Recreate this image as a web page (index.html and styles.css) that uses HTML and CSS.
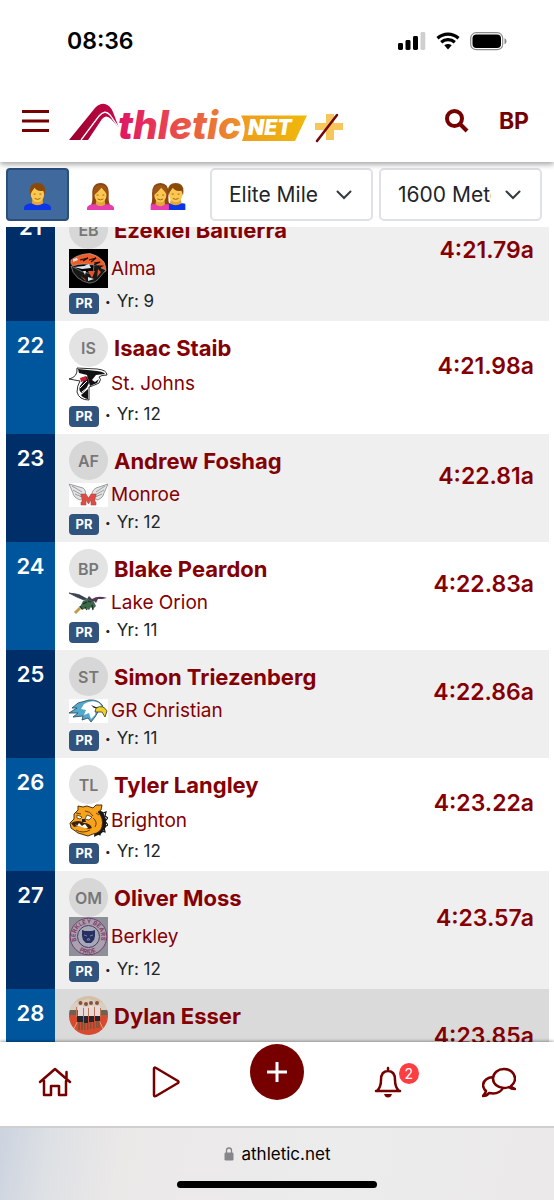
FILE: index.html
```html
<!DOCTYPE html>
<html lang="en">
<head>
<meta charset="utf-8">
<meta name="viewport" content="width=device-width, initial-scale=1">
<title>Athletic.net rankings</title>
<link rel="stylesheet" href="styles.css">
</head>
<body>
<div class="status">
  <span class="clock">08:36</span>
  <svg class="signal" viewBox="0 0 28 18" aria-hidden="true"><rect y="11" width="5" height="7" rx="1.4"/><rect x="7.500" y="8" width="5" height="10" rx="1.4"/><rect x="15" y="4" width="5" height="14" rx="1.4"/><rect x="22.500" width="4.800" height="18" rx="1.4" fill="#cfcfcf"/></svg>
  <svg class="wifi" viewBox="0 0 24 18" aria-hidden="true"><path d="M1.500 6.200C7.500.7 16.500.7 22.500 6.200M5.200 10.200C9 6.700 15 6.700 18.800 10.200" fill="none" stroke="#000" stroke-width="3.200"/><path d="M8.300 13.300Q12 10.500 15.700 13.300L12 17.500z"/></svg>
  <svg class="battery" viewBox="0 0 37 19" aria-hidden="true"><rect x=".7" y=".7" width="32" height="17" rx="5.500" fill="none" stroke="#8d8d8d" stroke-width="1.200"/><rect x="2.500" y="2.500" width="28.500" height="13.500" rx="4"/><path d="M34.500 6.300q2 .7 2 3t-2 3z" fill="#888"/></svg>
</div>

<header class="header">
  <button class="icon-button" aria-label="Menu"><svg class="burger" viewBox="0 0 27 24"><path d="M0 2.500h27M0 12h27M0 21.500h27"/></svg></button>
  <a class="brand" href="#" aria-label="Athletic.net plus">
    <svg class="logo" viewBox="0 0 276 40">
      <defs>
        <linearGradient id="word" gradientUnits="userSpaceOnUse" x1="50" x2="174" y1="0" y2="0"><stop stop-color="#e01565"/><stop offset=".4" stop-color="#e94350"/><stop offset="1" stop-color="#ec9725"/></linearGradient>
        <linearGradient id="peak" x1="0" x2="1"><stop stop-color="#98002b"/><stop offset="1" stop-color="#c9094c"/></linearGradient>
        <linearGradient id="flag" x1="0" x2="1"><stop stop-color="#ee9d1d"/><stop offset="1" stop-color="#efb90c"/></linearGradient>
      </defs>
      <path d="M0 38L26 6Q31 1 36 2Q41 3 44 10L50 26L42 17Q37 12 33 17L19 38z" fill="url(#peak)"/>
      <path d="M12 38L30 14Q36 7 41 13L50 26" fill="none" stroke="#fff" stroke-width="1.300"/>
      <path d="M172 13.500h66L226 39H173Q179 26 172 13.500z" fill="url(#flag)"/>
      <text class="word" x="49" y="37" fill="url(#word)">thletic</text>
      <text class="net" x="179" y="33" fill="#fff">NET</text>
      <path d="M257 12h8v9h9v7h-9v10h-8V28h-11v-7h11z" fill="#f7c65a"/>
      <path d="M248 39L268 13" stroke="#76040b" stroke-width="2.500" stroke-linecap="round"/>
    </svg>
  </a>
  <button class="icon-button" aria-label="Search"><svg class="search" viewBox="0 0 24 24"><circle cx="9.500" cy="9.500" r="7.500"/><path d="M15 15l7 7"/></svg></button>
  <button class="icon-button initials">BP</button>
</header>

<svg class="defs" aria-hidden="true">
  <symbol id="man" viewBox="0 0 28 28"><path d="M0 28v-2q0-4 7-5h14q7 1 7 5v2z" fill="#0b35e8"/><path d="M9 16h10l1 5q-6 4-12 0z" fill="#e2a837"/><ellipse cx="14" cy="11.500" rx="7" ry="8.500" fill="#fac850"/><path d="M6.500 13Q4 0 14 0T21.500 13L20 8Q13 9 11 5Q9 8 8 9z" fill="#8a490c"/><path d="M10 11.500h2m4 0h2m-7 4.500q3 2 6 0" stroke="#a85d17" fill="none"/></symbol>
  <symbol id="woman" viewBox="0 0 28 28"><path d="M4 23Q6 20 5.500 12Q5 0 14 0T22.500 12Q22 20 24 23z" fill="#8c4410"/><path d="M0 28v-2q0-3 6-4h16q6 1 6 4v2z" fill="#e83caf"/><path d="M10 16h8l1 6q-5 4-10 0z" fill="#e2a837"/><ellipse cx="14" cy="12" rx="6.300" ry="8.300" fill="#fac850"/><path d="M7 13Q5 2 14 2T21 13Q19 9 15 5Q11 10 7 13z" fill="#9d5515"/><path d="M10 12.500h2m4 0h2m-7 4q3 2 6 0" stroke="#a85d17" fill="none"/></symbol>
</svg>

<div class="filters">
  <button class="gender selected" aria-label="Men" aria-pressed="true"><svg class="person" viewBox="0 0 28 28"><use href="#man"/></svg></button>
  <button class="gender" aria-label="Women" aria-pressed="false"><svg class="person" viewBox="0 0 28 28"><use href="#woman"/></svg></button>
  <button class="gender pair" aria-label="Men and women" aria-pressed="false"><svg class="people" viewBox="0 0 36 28"><svg x="18" width="18" height="28" viewBox="4 0 18 28"><use href="#man" x="-2" width="28" height="28"/></svg><svg width="19" height="28" viewBox="4 0 19 28"><use href="#woman" width="28" height="28"/></svg></svg></button>
  <div class="select"><select aria-label="Division"><option>Elite Mile</option></select><svg class="chevron" viewBox="0 0 16 10"><path d="M1.500 1.500L8 8l6.500-6.500"/></svg></div>
  <div class="select"><select aria-label="Event"><option>1600 Meters</option></select><svg class="chevron" viewBox="0 0 16 10"><path d="M1.500 1.500L8 8l6.500-6.500"/></svg></div>
</div>

<main class="results">
<table class="ranking">
  <tbody>
  <tr>
    <td class="rank">21</td>
    <td class="athlete">
      <div class="person-line"><span class="avatar">EB</span><a class="name" href="#">Ezekiel Baltierra</a></div>
      <div class="school"><svg class="team" viewBox="0 0 39 39"><path d="M0 0h39v39H0z"/><path d="M2 11Q9 5 21 4.500Q29 6 35 13Q37 18 37 22L33 24Q31 17 25 16L15 15Q9 15 4 17Q1 15 2 11z" fill="#ee5c29" stroke="#bbb" stroke-width=".6"/><path d="M2 17Q3 24 9 29Q14 33 20 34Q27 34 31 28L37 21L32 19Q31 15 25 16L24 25L14 23z" fill="#171717" stroke="#aaa" stroke-width=".6"/><path d="M4 10L8 9 9 11 4 13zM5 18l10-1 5-2 2 4-9 1zM19 28l6 2-6 2zM14 22l2 4 1-4z" fill="#dbe4ec"/><path d="M19 22l7 0-3 7zM11 27l5 3 1 2zM29 20l3 3-4 5z" fill="#e45228"/><path d="M11 11l8-2-5 3M20 11l7-2-5 4M25 14l6-1-6 3M29 17l4 0-3 2" fill="none" stroke="#111" stroke-width="1.200"/></svg><a class="club" href="#">Alma</a></div>
      <div class="meta"><span class="pr">PR</span><span class="dot">•</span><span class="year">Yr: 9</span></div>
    </td>
    <td class="time"><a href="#">4:21.79a</a></td>
  </tr>
  <tr>
    <td class="rank">22</td>
    <td class="athlete">
      <div class="person-line"><span class="avatar">IS</span><a class="name" href="#">Isaac Staib</a></div>
      <div class="school"><svg class="team" viewBox="0 0 39 34"><path d="M8 1L28 2Q38 3 38 8Q32 8 30 10Q33 12 30 16Q24 19 20 20L20 33Q10 33 8 25Q8 19 11 14L0 12Q9 10 8 1z" fill="#fff" stroke="#171717" stroke-width=".9"/><path d="M9 2L28 4Q35 5 36 7L27 8L23 13L26 15L30 12L28 16L21 19L18 8L10 6zM18 9l2 7-3 6-4 4q-4-2-2-7zM12 28l7-6 0 10q-5-1-7-4z" fill="#111"/><path d="M11 11l6-2 1 4-6 2z" fill="#c51d32"/><path d="M11 21l7-7M13 25l5-4" stroke="#fff" stroke-width="1"/></svg><a class="club" href="#">St. Johns</a></div>
      <div class="meta"><span class="pr">PR</span><span class="dot">•</span><span class="year">Yr: 12</span></div>
    </td>
    <td class="time"><a href="#">4:21.98a</a></td>
  </tr>
  <tr>
    <td class="rank">23</td>
    <td class="athlete">
      <div class="person-line"><span class="avatar">AF</span><a class="name" href="#">Andrew Foshag</a></div>
      <div class="school short"><svg class="team" viewBox="0 0 39 24"><path d="M0 0h39v24H0z" fill="#fff"/><path d="M0 1L14 5Q18 8 16 14L11 17Q4 14 4 10zM39 1L27 5Q22 8 23 14L29 17Q35 14 35 10z" fill="#e3e5e6" stroke="#777" stroke-width=".7"/><path d="M3 3l10 6M4 7l9 5M6 11l7 3M36 3L27 9M35 7l-9 5M33 11l-7 3" stroke="#888" stroke-width=".8"/><path d="M12 11h5l2.500 4 2.500-4h5v3h-1v5h1v3h-5v-5l-2.500 4-2.500-4v5h-5v-3h1v-5h-1z" fill="#de4c45" stroke="#a5514c" stroke-width=".6"/></svg><a class="club" href="#">Monroe</a></div>
      <div class="meta"><span class="pr">PR</span><span class="dot">•</span><span class="year">Yr: 12</span></div>
    </td>
    <td class="time"><a href="#">4:22.81a</a></td>
  </tr>
  <tr>
    <td class="rank">24</td>
    <td class="athlete">
      <div class="person-line"><span class="avatar">BP</span><a class="name" href="#">Blake Peardon</a></div>
      <div class="school short"><svg class="team" viewBox="0 0 39 24"><path d="M0 2Q10 2 18 8L15 9Q7 6 0 2z" fill="#3a4254" stroke="#3a4254" stroke-width=".8"/><path d="M18 8L20 5 23 8Q29 4 38 7L33 8L29 8L27 12L25 10L23 13L18 12z" fill="#533958"/><path d="M14 10l5-2 6 3 2 4-3 3-2-2-2 3-3-2-4 2-2-3z" fill="#3d6949"/><path d="M11 15L5 21l2 2 5-5" fill="#c29a43"/><path d="M14 13l4-2m0 8l-2-3m7-2l1 5m-5-9l3 1m-11 4l2 3" stroke="#1b2e2c" stroke-width="1.300"/></svg><a class="club" href="#">Lake Orion</a></div>
      <div class="meta"><span class="pr">PR</span><span class="dot">•</span><span class="year">Yr: 11</span></div>
    </td>
    <td class="time"><a href="#">4:22.83a</a></td>
  </tr>
  <tr>
    <td class="rank">25</td>
    <td class="athlete">
      <div class="person-line"><span class="avatar">ST</span><a class="name" href="#">Simon Triezenberg</a></div>
      <div class="school short"><svg class="team" viewBox="0 0 39 24"><path d="M0 0h39v24H0z" fill="#fff"/><path d="M9 4L20 1Q29 0 34 7L29 13L26 18L22 23L19 19L13 21L14 17L4 18L9 14L0 14L8 9L3 9z" fill="#53a9cc" stroke="#23475d" stroke-width=".8"/><path d="M15 5Q23 0 30 4L33 8L27 12L26 16L22 20L20 14L15 16L17 11L12 10z" fill="#fff"/><path d="M27 9Q34 5 38 12L36 18L33 13L26 13z" fill="#eed02b" stroke="#393727" stroke-width=".8"/><path d="M22 6l7 3-4 0z" fill="#222"/></svg><a class="club" href="#">GR Christian</a></div>
      <div class="meta"><span class="pr">PR</span><span class="dot">•</span><span class="year">Yr: 11</span></div>
    </td>
    <td class="time"><a href="#">4:22.86a</a></td>
  </tr>
  <tr>
    <td class="rank">26</td>
    <td class="athlete">
      <div class="person-line"><span class="avatar">TL</span><a class="name" href="#">Tyler Langley</a></div>
      <div class="school"><svg class="team" viewBox="0 0 39 34"><path d="M28 5l6 3 3 7 0 8-4 6-8 4z" fill="#181818"/><path d="M34 9l3-1-1 4 3 2-3 3 3 4-4 2 1 5-4-1-1 4-4-2" fill="none" stroke="#181818" stroke-width="1.200"/><path d="M9 6L9 2 14 3 18 2 24 4 27 1 33 1 32 6 29 8Q35 14 33 23Q31 29 24 30L19 32L9 29L2 24 1 19 5 15 5 10z" fill="#f9a31b" stroke="#31220d" stroke-width=".9"/><path d="M2 19q8-4 13 0 6 0 8 5l-3 1-6-2-5-1-4 1z" fill="#3c220e"/><path d="M6 20l2 2 2-3 3 3 3-2 3 4-3 0-7-2z" fill="#fff"/><path d="M18 11l5 2-3 3-4-1zM8 11l5 2-2 2-3-1z" fill="#fff" stroke="#222" stroke-width=".7"/><path d="M13 15l3 0 1 3-4 0z" fill="#222"/><path d="M16 7q5 0 8 5M7 9l5 1m12 4q5 4 2 9m-19 3q7 4 14 0m6-17l3 2" fill="none" stroke="#422608" stroke-width=".8"/></svg><a class="club" href="#">Brighton</a></div>
      <div class="meta"><span class="pr">PR</span><span class="dot">•</span><span class="year">Yr: 12</span></div>
    </td>
    <td class="time"><a href="#">4:23.22a</a></td>
  </tr>
  <tr>
    <td class="rank">27</td>
    <td class="athlete">
      <div class="person-line"><span class="avatar">OM</span><a class="name" href="#">Oliver Moss</a></div>
      <div class="school"><svg class="team" viewBox="0 0 39 39"><defs><path id="ring-top" d="M8.500 26A12.800 12.800 0 1 1 30.500 26"/><path id="ring-bottom" d="M9.500 33.300A17 17 0 0 0 29.500 33.300"/></defs><path d="M0 0h39v39H0z" fill="#8d9197"/><circle cx="19.500" cy="19.500" r="18.300" fill="#a9a1b0" stroke="#713c6b"/><circle cx="19.500" cy="19.500" r="11" fill="#a5aab6" stroke="#53365e"/><g class="seal"><text><textPath href="#ring-top" startOffset="2">BERKLEY BEARS</textPath></text><text><textPath href="#ring-bottom" startOffset="1">PRIDE</textPath></text></g><path d="M13 13l3 1h7l3-1 0 6-1 4-3 3h-5l-3-3-1-4z" fill="#273061"/><path d="M15 18l3 1m6-1l-3 1m-3 4l1.500-2 1.500 2z" fill="none" stroke="#8087b4" stroke-width=".9"/></svg><a class="club" href="#">Berkley</a></div>
      <div class="meta"><span class="pr">PR</span><span class="dot">•</span><span class="year">Yr: 12</span></div>
    </td>
    <td class="time"><a href="#">4:23.57a</a></td>
  </tr>
  <tr class="active">
    <td class="rank">28</td>
    <td class="athlete">
      <div class="person-line"><svg class="photo" viewBox="0 0 39 39" role="img" aria-label="Dylan Esser"><path d="M0 0h39v39H0z" fill="#d3c0a6"/><path d="M0 8l19-5 20 5v6H0z" fill="#d8cfc2"/><path d="M0 19h39v20H0z" fill="#d84a30"/><path d="M0 14h39v5H0z" fill="#6b6255"/><path d="M3 37l8-17M36 37l-8-17" stroke="#ef9676"/><g fill="#8a5136"><circle cx="11.500" cy="7" r="2"/><circle cx="17" cy="8" r="2"/><circle cx="22" cy="7" r="2"/><circle cx="28" cy="7" r="2"/><path d="M9 26h2v8H9zM12 26h2v8h-2zM15 26h1.500v8H15zM18 26h1.500v8H18zM21 26h1.500v7H21zM24 26h1.500v7H24zM27 25h1.500v7H27zM29 25h1.500v7H29z"/></g><path d="M9 10h5v10H9zM15 11h4v9h-4zM20 10h5v10h-5zM26 10h5v10h-5z" fill="#ead9d9"/><path d="M8 20h6v6H8zM15 20h4v7h-4zM20 20h5v6h-5zM26 20h5v5h-5z" fill="#25262d"/><path d="M7.500 11v10m7-9v9m5-9v9m6-10v10m6-9v9" stroke="#b97558"/></svg><a class="name" href="#">Dylan Esser</a></div>
      <div class="school tall"></div>
      <div class="meta"></div>
    </td>
    <td class="time"><a href="#">4:23.85a</a></td>
  </tr>
  </tbody>
</table>
</main>

<nav class="tabs">
  <a href="#" aria-label="Home"><svg class="tab-icon" viewBox="0 0 34 32"><path d="M2 16L17 3l15 13M28.500 12V6M6 15v14h7v-9h8v9h7V15"/></svg></a>
  <a href="#" aria-label="Videos"><svg class="tab-icon" viewBox="0 0 34 32"><path d="M5 2.500Q5 1 7 2L29 15Q30 16 29 17L7 30Q5 31 5 29z"/></svg></a>
  <a href="#" aria-label="Add" class="add"><svg class="plus" viewBox="0 0 22 22"><path d="M11 1v20M1 11h20"/></svg></a>
  <a href="#" aria-label="Notifications"><svg class="tab-icon" viewBox="0 0 34 32"><path d="M17 2v3M5 25h24M6 25q4-4 4-11 0-9 7-9t7 9q0 7 4 11"/><path d="M13 28h8q-1 3.500-4 3.500t-4-3.500" class="solid"/></svg><span class="badge">2</span></a>
  <a href="#" aria-label="Messages"><svg class="tab-icon" viewBox="0 0 34 32"><path d="M29 20Q33 17 33 12.500C33 7 28 3 22 3S11 7 11 12.500s5 9.500 11 9.500q3 0 5-1 2 2 6 2-3-1-4-3zM11 11Q2 12 1 19q0 3 3 6-1 3-3 5 4 0 6-3 10 2 14-5"/></svg></a>
</nav>

<footer class="browser">
  <div class="address"><svg class="lock" viewBox="0 0 10 14"><path d="M2.500 6V3.500a2.500 2.500 0 0 1 5 0V6" fill="none" stroke="#85858a" stroke-width="1.300"/><rect x=".5" y="5.500" width="9" height="8" rx="1.300" fill="#85858a"/></svg><span>athletic.net</span></div>
  <div class="home-bar"></div>
</footer>
</body>
</html>
```
FILE: styles.css
```css
* { box-sizing: border-box; }

body {
  margin: 0;
  height: 100vh;
  display: flex;
  flex-direction: column;
  overflow: hidden;
  background: #fff;
  color: #212529;
  font-family: Inter, "Liberation Sans", sans-serif;
}

button {
  font: inherit;
  color: inherit;
  border: 0;
  padding: 0;
  background: none;
}

a { color: #840003; text-decoration: none; }

svg { display: block; flex: none; }

.defs { position: absolute; width: 0; height: 0; }

.status {
  flex: none;
  height: 82px;
  padding: 0 47px 0 67px;
  display: flex;
  align-items: center;
  gap: 10px;
}

.clock {
  flex: 1;
  color: #000;
  font-size: 23px;
  font-weight: 600;
}

.signal { width: 28px; height: 18px; }
.wifi { width: 24px; height: 18px; }
.battery { width: 37px; height: 19px; }

.header {
  position: relative;
  z-index: 1;
  flex: none;
  height: 80px;
  padding: 0 25px 2px 22px;
  display: flex;
  align-items: center;
  box-shadow: 0 2px 6px rgba(0, 0, 0, .4);
  background: #fff;
  clip-path: inset(0 0 -8px 0);
}

.icon-button { color: #760000; }
.burger { width: 27px; height: 24px; fill: none; stroke: #760000; stroke-width: 3; }
.brand { flex: 1; padding: 2px 0 0 20px; }
.logo { width: 276px; height: 40px; overflow: visible; }

.word, .net { font-family: Inter, sans-serif; font-style: italic; }
.word { font-size: 39px; font-weight: 800; }
.net { font-size: 21px; font-weight: 900; }

.search { width: 24px; height: 24px; fill: none; stroke: #760000; stroke-width: 4; }
.initials { margin-left: 30px; font-size: 23px; font-weight: 700; }

.filters {
  flex: none;
  height: 65px;
  padding: 6px 12px 6px 6px;
  display: flex;
}

.gender {
  flex: none;
  width: 63px;
  display: flex;
  align-items: center;
  justify-content: center;
  border: 2px solid transparent;
  border-radius: 4px;
  padding-top: 4px;
}

.gender.selected { background: #40699d; border-color: #2b4e7c; }
.gender.pair { width: 72px; }
.person { width: 27px; height: 27px; }
.people { width: 36px; height: 27px; }

.select {
  flex: 1;
  min-width: 0;
  margin-left: 6px;
  display: grid;
  align-items: center;
}

.select > * { grid-area: 1 / 1; }

.select select {
  appearance: none;
  width: 100%;
  height: 100%;
  padding: 0 49px 0 17px;
  border: 2px solid #dee2e6;
  border-radius: 5px;
  background: #fff;
  color: #212529;
  font: 400 21px Inter, sans-serif;
}

.chevron {
  width: 16px;
  height: 10px;
  margin-right: 21px;
  justify-self: end;
  fill: none;
  stroke: #343a40;
  stroke-width: 2;
  stroke-linecap: round;
  pointer-events: none;
}

.results {
  flex: 1;
  min-height: 0;
  margin: 0 5px 0 6px;
  overflow: hidden;
}

/* The list is scrolled part way into its first row. */
.ranking {
  width: 100%;
  margin-top: -24px;
  border-collapse: collapse;
}

.ranking td { padding: 0; vertical-align: top; }
.ranking tr:nth-child(odd) { background: #efefef; }
.ranking tr.active { background: #dadada; }

.ranking .rank {
  width: 49px;
  padding-top: 10px;
  background: #00569d;
  color: #fff;
  font-size: 22px;
  font-weight: 600;
  line-height: 28px;
  text-align: center;
}

.ranking tr:nth-child(odd) .rank { background: #002e69; }
.ranking .athlete { padding: 7px 0 0 14px; }

.person-line { display: flex; align-items: center; height: 39px; gap: 6px; }

.avatar, .photo { width: 39px; height: 39px; border-radius: 50%; }

.avatar {
  display: flex;
  align-items: center;
  justify-content: center;
  background: #e3e3e3;
  color: #777;
  font-size: 16px;
  font-weight: 600;
}

.ranking tr:nth-child(odd) .avatar { background: #d7d7d7; }

.name { font-size: 22px; font-weight: 700; line-height: 28px; white-space: nowrap; }
.school { display: flex; align-items: center; gap: 3px; }
.school.short { height: 29px; }
.school.tall { height: 39px; }
.team { width: 39px; }
.club { font-size: 19px; line-height: 24px; }
.seal { font: 700 6px Inter, sans-serif; fill: #813d67; }

.meta {
  display: flex;
  align-items: center;
  height: 33px;
  padding-bottom: 8px;
  gap: 6px;
  font-size: 17px;
}

.dot { font-size: 10px; }

.pr {
  width: 30px;
  margin-top: 5px;
  border-radius: 4px;
  background: #31547f;
  color: #fff;
  font-size: 13px;
  font-weight: 700;
  line-height: 21px;
  text-align: center;
}

.ranking .time {
  padding: 0 15px 24px 0;
  vertical-align: middle;
  text-align: right;
  font-size: 23px;
  font-weight: 600;
}

.tabs {
  position: relative;
  flex: none;
  height: 84px;
  padding-bottom: 4px;
  display: grid;
  grid-template-columns: repeat(5, 1fr);
  align-items: center;
  justify-items: center;
  background: #fff;
  box-shadow: 0 -1px 3px rgba(0, 0, 0, .35);
}

.tabs a { position: relative; }

.tab-icon {
  width: 34px;
  height: 32px;
  fill: none;
  stroke: #760000;
  stroke-width: 2.5;
  stroke-linecap: round;
  stroke-linejoin: round;
}

.solid { fill: #760000; stroke: none; }

.add {
  width: 54px;
  height: 56px;
  margin-bottom: 20px;
  display: flex;
  align-items: center;
  justify-content: center;
  border-radius: 50%;
  background: #760000;
}

.plus { width: 22px; height: 22px; fill: none; stroke: #fff; stroke-width: 3; }

.badge {
  position: absolute;
  top: -3px;
  right: -14px;
  width: 20px;
  border-radius: 50%;
  background: #fc3d42;
  color: #fff;
  font-size: 14px;
  line-height: 21px;
  text-align: center;
}

.browser {
  position: relative;
  flex: none;
  height: 74px;
  padding: 15px 0 12px;
  display: flex;
  flex-direction: column;
  align-items: center;
  justify-content: space-between;
  border-top: 2px solid #cfcfd0;
  background: linear-gradient(100deg, #ccd3df 0, #dde0e4 9%, #ebe8e8 22%, #ececec 60%, #ebe9e9 100%);
}

.address { display: flex; align-items: center; gap: 8px; color: #000; font-size: 17px; line-height: 22px; }
.lock { width: 10px; height: 14px; }
.home-bar { width: 36%; height: 7px; border-radius: 4px; background: #000; }
```
